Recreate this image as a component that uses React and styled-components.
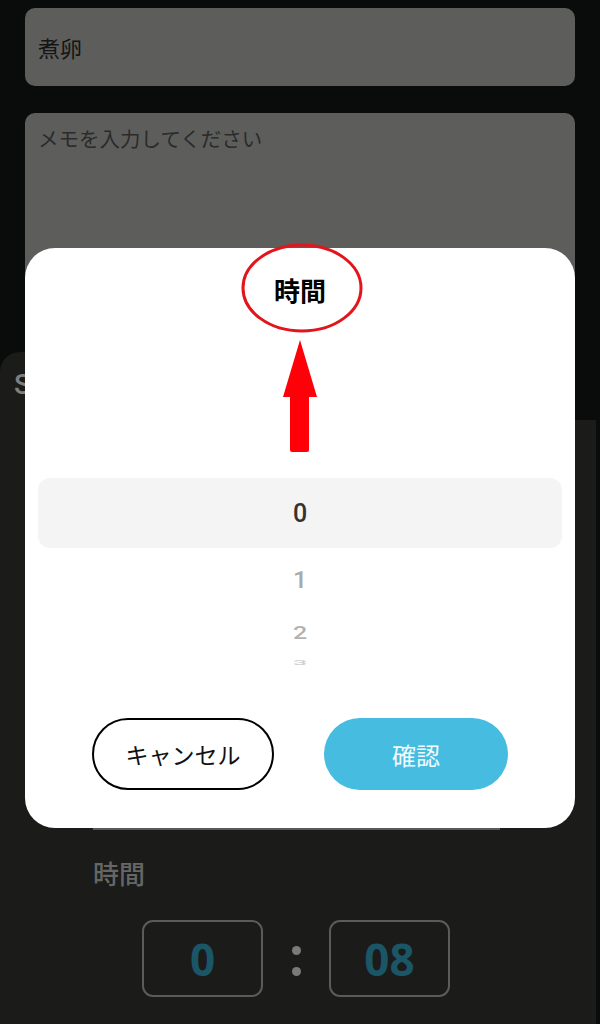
import React from "react";
import styled, { createGlobalStyle } from "styled-components";

const GlobalStyle = createGlobalStyle`
  html, body {
    margin: 0;
    padding: 0;
    background: #0a0c0b;
  }
  body {
    font-family: "Noto Sans CJK JP", "Noto Sans", sans-serif;
    overflow: hidden;
  }
  * { box-sizing: border-box; }
`;

const Screen = styled.div`
  position: relative;
  width: 600px;
  height: 1024px;
  overflow: hidden;
  background: #0a0c0b;
`;

/* ---------- recipe form behind the sheet ---------- */

const Form = styled.div`
  display: flex;
  flex-direction: column;
  gap: 27px;
  padding: 8px 25px 0;
`;

const TextInput = styled.div`
  height: 78px;
  display: flex;
  align-items: center;
  padding: 0 13px;
  background: #5d5e5c;
  border-radius: 10px;
  font-size: 22px;
  color: #141514;
`;

const MemoArea = styled.div`
  height: 300px;
  padding: 10px 13px;
  background: #5d5e5c;
  border-radius: 10px;
  font-size: 20.5px;
  line-height: 30px;
  color: #2a2b2a;
`;

/* ---------- step editor sheet ---------- */

const Sheet = styled.section`
  position: absolute;
  left: 0;
  top: 352px;
  width: 596px;
  bottom: 0;
  display: flex;
  flex-direction: column;
  background: #1b1c1a;
  border-top-left-radius: 20px;
  clip-path: polygon(0 0, 556px 0, 556px 68px, 100% 68px, 100% 100%, 0 100%);
`;

const SheetTitle = styled.h2`
  margin: 0;
  padding: 16px 14px 0;
  font-family: Roboto, "Liberation Sans", Arial, sans-serif;
  font-weight: 500;
  font-size: 28px;
  line-height: 34px;
  color: #7f7f7f;
`;

const StepField = styled.div`
  height: 428px;
  margin: 0 96px 0 93px;
  border-bottom: 2px solid #5a5a5a;
`;

const FieldLabel = styled.div`
  margin: 27px 0 0 93px;
  font-size: 26px;
  font-weight: 500;
  line-height: 32px;
  color: #666;
`;

const TimeRow = styled.div`
  display: flex;
  justify-content: center;
  align-items: center;
  margin-top: 31px;
  padding-right: 4px;
`;

const TimeBox = styled.div`
  width: 121px;
  height: 77px;
  display: flex;
  align-items: center;
  justify-content: center;
  border: 2px solid #5b5b5b;
  border-radius: 11px;
  font-family: "Noto Sans", sans-serif;
  font-weight: 700;
  font-size: 44px;
  color: #1b5667;
`;

const Colon = styled.div`
  width: 66px;
  display: flex;
  flex-direction: column;
  align-items: center;
  gap: 12px;
  padding-top: 4px;
`;

const Dot = styled.span`
  width: 9px;
  height: 9px;
  border-radius: 50%;
  background: #7a7a7a;
`;

/* ---------- hour picker dialog ---------- */

const Dialog = styled.div`
  position: absolute;
  left: 25px;
  top: 248px;
  width: 550px;
  height: 580px;
  display: flex;
  flex-direction: column;
  align-items: center;
  background: #fff;
  border-radius: 30px;
`;

const DialogHeader = styled.div`
  position: relative;
  width: 100%;
  height: 84px;
  display: flex;
  align-items: center;
  justify-content: center;
`;

const DialogTitle = styled.h3`
  margin: 0;
  font-size: 26px;
  font-weight: 700;
  line-height: 1;
  color: #000;
`;

const Callout = styled.svg`
  position: absolute;
  left: 50%;
  top: 50%;
  transform: translate(calc(-50% + 2px), calc(-50% - 2px));
  overflow: visible;
  pointer-events: none;
`;

const Pointer = styled.svg`
  display: block;
  margin-top: 8px;
`;

const Wheel = styled.div`
  align-self: stretch;
  margin: 26px 13px 0;
  display: flex;
  flex-direction: column;
`;

const WheelSelected = styled.div`
  height: 70px;
  display: flex;
  align-items: center;
  justify-content: center;
  background: #f4f4f4;
  border-radius: 12px;
  font-family: Roboto, "Liberation Sans", Arial, sans-serif;
  font-weight: 500;
  font-size: 25px;
  color: #333;
`;

const WheelItem = styled.div`
  height: ${(p) => p.$h}px;
  display: flex;
  align-items: center;
  justify-content: center;
  font-family: Roboto, "Liberation Sans", Arial, sans-serif;
  font-weight: 500;
  font-size: 25px;
  color: ${(p) => p.$color};
  overflow: hidden;

  span {
    display: inline-block;
    transform: scaleY(${(p) => p.$squash});
  }
`;

const Actions = styled.div`
  display: flex;
  gap: 50px;
  margin-top: 48px;
`;

const PillButton = styled.button`
  width: ${(p) => (p.$primary ? 184 : 182)}px;
  height: 72px;
  border-radius: 36px;
  border: ${(p) => (p.$primary ? "none" : "2.5px solid #000")};
  background: ${(p) => (p.$primary ? "#45bce0" : "#fff")};
  color: ${(p) => (p.$primary ? "#f4fbfe" : "#111")};
  font-family: "Noto Sans CJK JP", sans-serif;
  font-size: ${(p) => (p.$primary ? 24 : 23)}px;
  font-weight: 400;
  cursor: pointer;
`;

const wheelRows = [
  { label: "1", h: 62, color: "#a9a9a9", squash: 0.95 },
  { label: "2", h: 44, color: "#b2b2b2", squash: 0.72 },
  { label: "3", h: 16, color: "#cfcfcf", squash: 0.3 },
];

export default function App() {
  return (
    <Screen>
      <GlobalStyle />
      <Form>
        <TextInput>煮卵</TextInput>
        <MemoArea>メモを入力してください</MemoArea>
      </Form>

      <Sheet>
        <SheetTitle>Step 1</SheetTitle>
        <StepField />
        <FieldLabel>時間</FieldLabel>
        <TimeRow>
          <TimeBox>0</TimeBox>
          <Colon>
            <Dot />
            <Dot />
          </Colon>
          <TimeBox>08</TimeBox>
        </TimeRow>
      </Sheet>

      <Dialog>
        <DialogHeader>
          <DialogTitle>時間</DialogTitle>
          <Callout width="124" height="92" viewBox="0 0 124 92">
            <ellipse cx="62" cy="46" rx="59" ry="43" fill="none" stroke="#e2141c" strokeWidth="3" />
          </Callout>
        </DialogHeader>
        <Pointer width="36" height="112" viewBox="0 0 36 112">
          <polygon points="18,0 1,57 35,57" fill="#ff0008" />
          <rect x="8" y="55" width="19" height="57" rx="2" fill="#ff0008" />
        </Pointer>
        <Wheel>
          <WheelSelected>0</WheelSelected>
          {wheelRows.map((r) => (
            <WheelItem key={r.label} $h={r.h} $color={r.color} $squash={r.squash}>
              <span>{r.label}</span>
            </WheelItem>
          ))}
        </Wheel>
        <Actions>
          <PillButton>キャンセル</PillButton>
          <PillButton $primary>確認</PillButton>
        </Actions>
      </Dialog>
    </Screen>
  );
}
